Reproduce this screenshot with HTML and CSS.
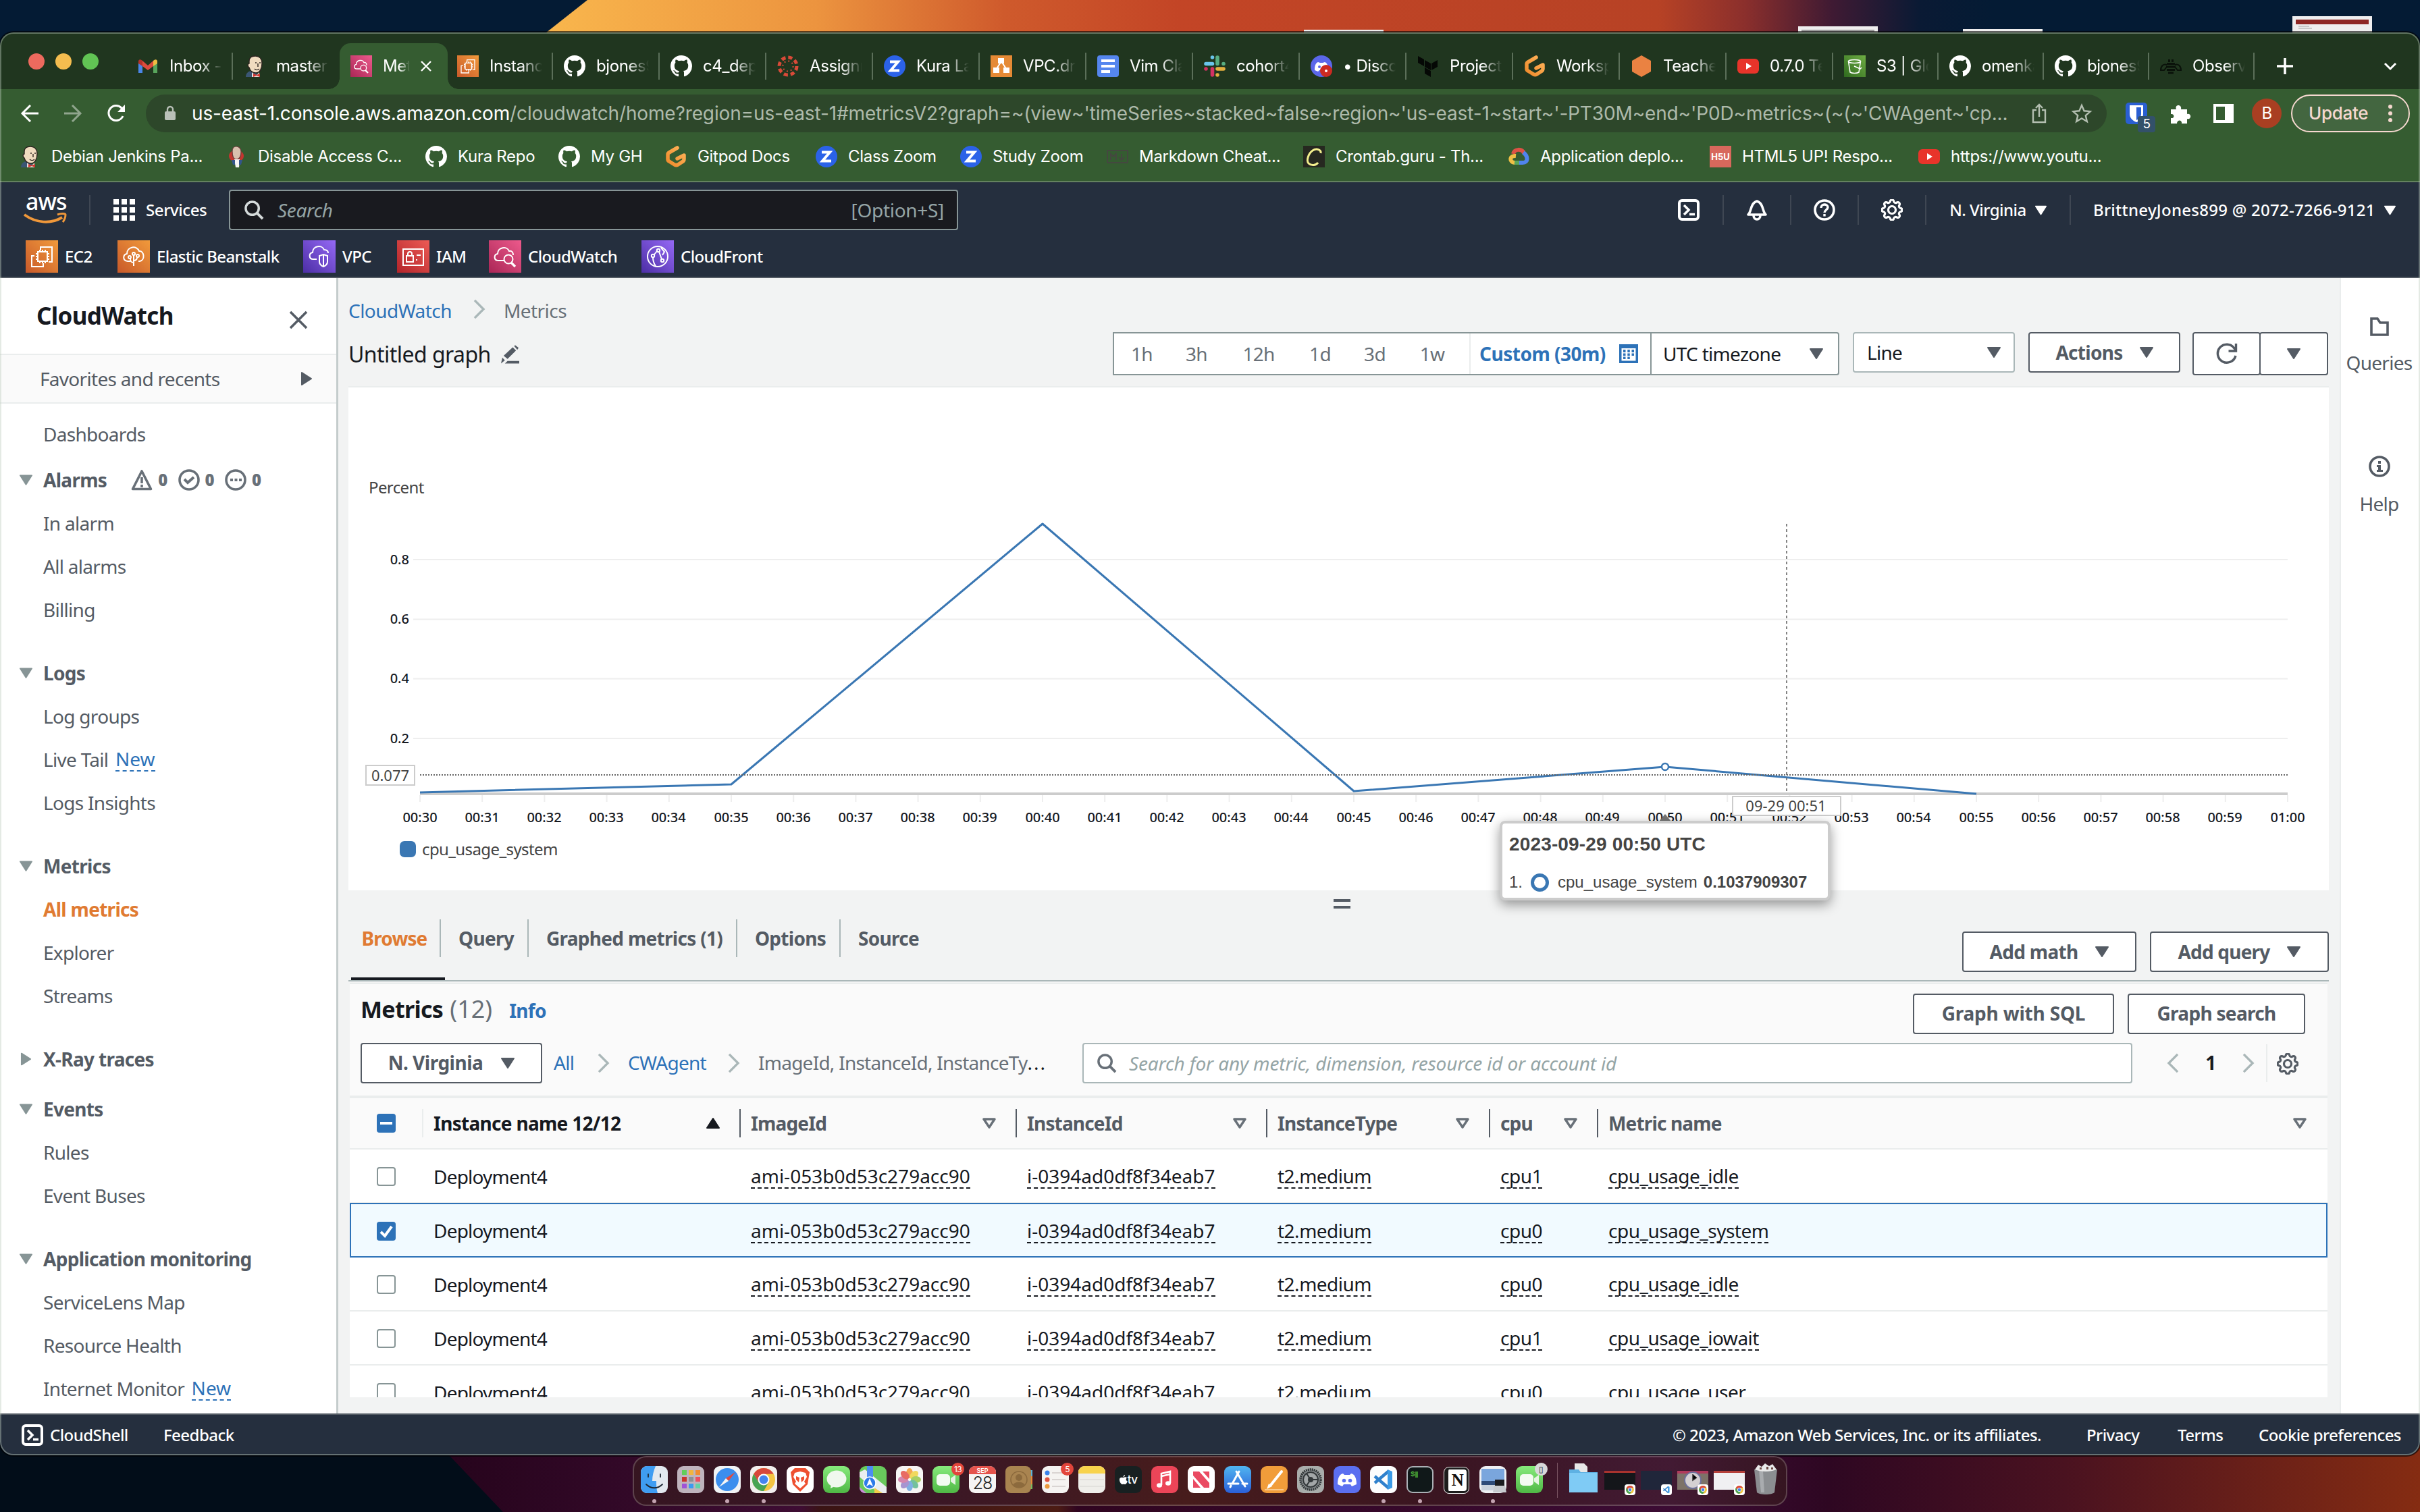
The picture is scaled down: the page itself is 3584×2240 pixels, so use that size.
FILE: index.html
```html
<!DOCTYPE html>
<html lang="en">
<head>
<meta charset="utf-8">
<title>Metrics | CloudWatch</title>
<link rel="stylesheet" href="styles.css">
</head>
<body>
<svg class="defs" width="0" height="0" aria-hidden="true">
  <defs>
    <linearGradient id="gOrange" x1="0" y1="1" x2="1" y2="0"><stop offset="0" stop-color="#c8592a"/><stop offset="1" stop-color="#f19a3b"/></linearGradient>
    <linearGradient id="gPurple" x1="0" y1="1" x2="1" y2="0"><stop offset="0" stop-color="#4c2ea5"/><stop offset="1" stop-color="#9569f5"/></linearGradient>
    <linearGradient id="gRed" x1="0" y1="1" x2="1" y2="0"><stop offset="0" stop-color="#b3242a"/><stop offset="1" stop-color="#ec5b55"/></linearGradient>
    <linearGradient id="gPink" x1="0" y1="1" x2="1" y2="0"><stop offset="0" stop-color="#aa2656"/><stop offset="1" stop-color="#ed5a8c"/></linearGradient>
    <linearGradient id="gGreen" x1="0" y1="1" x2="1" y2="0"><stop offset="0" stop-color="#2f6a1e"/><stop offset="1" stop-color="#6fae44"/></linearGradient>
    <linearGradient id="gGit" x1="1" y1="0" x2="0" y2="1"><stop offset="0" stop-color="#ffb45b"/><stop offset="1" stop-color="#ee8a2b"/></linearGradient>
    <linearGradient id="gMsg" x1="0" y1="0" x2="0" y2="1"><stop offset="0" stop-color="#87ea7c"/><stop offset="1" stop-color="#4fb845"/></linearGradient>
    <linearGradient id="gBlue" x1="0" y1="0" x2="0" y2="1"><stop offset="0" stop-color="#50b5f0"/><stop offset="1" stop-color="#2a5fd8"/></linearGradient>
  </defs>
  <symbol id="github" viewBox="0 0 16 16"><path fill="#fff" d="M8 0C3.58 0 0 3.58 0 8c0 3.54 2.29 6.53 5.47 7.59.4.07.55-.17.55-.38 0-.19-.01-.82-.01-1.49-2.01.37-2.53-.49-2.69-.94-.09-.23-.48-.94-.82-1.13-.28-.15-.68-.52-.01-.53.63-.01 1.08.58 1.23.82.72 1.21 1.87.87 2.33.66.07-.52.28-.87.51-1.07-1.78-.2-3.64-.89-3.64-3.95 0-.87.31-1.59.82-2.15-.08-.2-.36-1.02.08-2.12 0 0 .67-.21 2.2.82.64-.18 1.32-.27 2-.27.68 0 1.36.09 2 .27 1.53-1.04 2.2-.82 2.2-.82.44 1.1.16 1.92.08 2.12.51.56.82 1.27.82 2.15 0 3.07-1.87 3.75-3.65 3.95.29.25.54.73.54 1.48 0 1.07-.01 1.93-.01 2.2 0 .21.15.46.55.38A8.012 8.012 0 0 0 16 8c0-4.42-3.58-8-8-8z"/></symbol>
  <symbol id="gmail" viewBox="0 0 32 32"><path fill="#4a86e8" d="M2 9v17h6V13z"/><path fill="#58a55c" d="M30 9v17h-6V13z"/><path fill="#dc4b3e" d="M8 8l8 7 8-7v8l-8 6-8-6z"/><path fill="#b5332a" d="M2 9c0-3 3-4 6-1v8l-6-4z"/><path fill="#f0bd42" d="M30 9c0-3-3-4-6-1v8l6-4z"/></symbol>
  <symbol id="jenkins" viewBox="0 0 32 32"><path fill="#3a5674" d="M3 32c0-6 4-8 7-9l8 3 6 6z"/><path fill="#f0dcc0" stroke="#2c2420" stroke-width="1.4" d="M8 9c0-6 4-8 9-8s10 3 10 11c0 7-3 14-9 14S9 22 8 18C5 16 6 12 8 12z"/><path fill="#e5e0dc" d="M12 25l6 5 5-5v7H12z"/><path fill="#d0342c" d="M14 27l5 2 5-2v5l-5-2-5 2z"/><path fill="none" stroke="#2c2420" stroke-width="1.4" d="M17 11h2M23 11h2M21 12v5M16 20c2 2 5 2 7 0"/></symbol>
  <symbol id="jenkins-red" viewBox="0 0 32 32"><ellipse cx="16" cy="15" rx="11" ry="9" fill="#c2362f"/><path fill="#d9c0ae" stroke="#6a3a3a" stroke-width="1.2" d="M10 8c0-6 3-7 6-7s7 2 7 8-2 11-7 11-6-6-6-12z"/><path fill="#f5f5f5" d="M13 20h8l-1 12h-5z"/><path fill="#34558b" d="M9 21h5v7h-3zM20 21h5l-2 7h-3z"/></symbol>
  <symbol id="cw-art" viewBox="0 0 48 48"><g fill="none" stroke="#fff" stroke-width="2"><path d="M22 30H14c-7 0-7-9-1-10 0-10 14-12 17-4 4-1 6 2 6 6"/><circle cx="29" cy="28" r="6.5"/><path d="M33 33l6 6" stroke-width="3.4"/></g></symbol>
  <symbol id="ec2-art" viewBox="0 0 48 48"><g fill="none" stroke="#fff" stroke-width="2"><path d="M22 15v-5h17v22h-5M13 23H9v16h17v-5"/><path d="M18 17h14v14H18zM21 14v3M25 14v3M29 14v3M21 31v3M25 31v3M29 31v3M15 20h3M15 24h3M15 28h3M32 20h3M32 24h3M32 28h3"/></g></symbol>
  <symbol id="cloudwatch" viewBox="0 0 48 48"><path fill="url(#gPink)" d="M0 0h48v48H0z"/><use href="#cw-art"/></symbol>
  <symbol id="ec2" viewBox="0 0 48 48"><path fill="url(#gOrange)" d="M0 0h48v48H0z"/><use href="#ec2-art"/></symbol>
  <symbol id="beanstalk" viewBox="0 0 48 48"><path fill="url(#gOrange)" d="M0 0h48v48H0z"/><g fill="none" stroke="#fff" stroke-width="2"><path d="M19 31h-4c-8-1-7-10-1-11 0-11 15-13 18-4 8-1 9 14 1 15h-2"/><path d="M24 38V22M24 33c-4 0-5-2-5-6M24 30c4 0 5-2 5-5"/><circle cx="24" cy="20" r="2"/><circle cx="18" cy="25" r="2"/><circle cx="30" cy="23" r="2"/></g></symbol>
  <symbol id="vpc" viewBox="0 0 48 48"><path fill="url(#gPurple)" d="M0 0h48v48H0z"/><g fill="none" stroke="#fff" stroke-width="2"><path d="M20 28h-5c-7 0-7-9-1-10 0-10 14-12 17-4 4 0 6 2 6 5"/><path d="M30 21l6 2v9c0 3-3 6-6 7-3-1-6-4-6-7v-9zM30 21v18"/></g></symbol>
  <symbol id="iam" viewBox="0 0 48 48"><path fill="url(#gRed)" d="M0 0h48v48H0z"/><g fill="none" stroke="#fff" stroke-width="2"><path d="M9 13h30v24H9zM14 23h10v9H14zM16 23v-3c0-4 6-4 6 0v3M29 22h6M28 29h2"/></g></symbol>
  <symbol id="cloudfront" viewBox="0 0 48 48"><path fill="url(#gPurple)" d="M0 0h48v48H0z"/><g fill="none" stroke="#fff" stroke-width="2"><circle cx="24" cy="24" r="15"/><circle cx="25" cy="15" r="2.2"/><circle cx="17" cy="23" r="2.2"/><circle cx="31" cy="30" r="2.2"/><path d="M17 25c0 6 1 9 4 13M23 16l-4 5M26 17l4 11M29 11l5 6-3 5"/></g></symbol>
  <symbol id="canvas" viewBox="0 0 32 32"><circle cx="16" cy="16" r="13" fill="none" stroke="#d94a38" stroke-width="5" stroke-dasharray="6.2 4" /><circle cx="16" cy="16" r="7.6" fill="none" stroke="#d94a38" stroke-width="2" stroke-dasharray="2 3.97"/></symbol>
  <symbol id="zed" viewBox="0 0 32 32"><circle cx="16" cy="16" r="16" fill="#2b62e8"/><path fill="none" stroke="#fff" stroke-width="4" d="M9 9.500h12L10 22.500h13"/></symbol>
  <symbol id="drawio" viewBox="0 0 32 32"><path fill="#e58a35" d="M0 0h32v32H0z"/><path stroke="#fff" stroke-width="2" d="M16 9L8 21M16 9l8 12"/><path fill="#fff" d="M11 4h9v8h-9zM4 18h9v8H4zM19 18h9v8h-9z"/></symbol>
  <symbol id="docs" viewBox="0 0 32 32"><rect width="32" height="32" rx="4" fill="#5586ee"/><path fill="#fff" d="M6 6h20v4H6zM6 14h20v4H6zM6 22h13v4H6z"/></symbol>
  <symbol id="slack" viewBox="0 0 32 32"><g stroke-width="5.600" stroke-linecap="round"><path stroke="#6ac5ec" d="M12.500 3v0M3 12.500h9.500"/><path stroke="#57ad82" d="M20 3v9.500M29 12.500v0"/><path stroke="#d23163" d="M12.500 20v9M3 20v0"/><path stroke="#e3b03f" d="M20 20h9M20 29v0"/></g></symbol>
  <symbol id="discord" viewBox="0 0 32 32"><circle cx="16" cy="16" r="16" fill="#5b67ea"/><path fill="#fff" d="M6 22c0-8 2-11 5-12l3 1h4l3-1c3 1 5 4 5 12l-5 2-2-2h-6l-2 2z"/><circle cx="13" cy="17" r="2" fill="#5b67ea"/><circle cx="23" cy="23" r="9" fill="#cc2a22"/><circle cx="23" cy="23" r="2" fill="#fff"/></symbol>
  <symbol id="terraform" viewBox="0 0 32 32"><path fill="#050805" d="M1 1l9 5v10l-9-5zM11 7l9 5v10l-9-5zM21 12l9-5v10l-9 5zM11 18l9 5v9l-9-5z"/></symbol>
  <symbol id="gitpod" viewBox="0 0 32 32"><path fill="none" stroke="url(#gGit)" stroke-width="5.500" stroke-linejoin="round" stroke-linecap="round" d="M18 3L6 10c-2 1-2 2-2 3v7c0 1 0 2 2 3l8 5c2 1 3 1 5 0l6-4c2-1 3-2 3-4v-6l-10 5"/></symbol>
  <symbol id="hexagon" viewBox="0 0 32 32"><path fill="#ea8242" d="M16 0l14 8v16l-14 8L2 24V8z"/></symbol>
  <symbol id="youtube" viewBox="0 0 32 32"><rect y="5" width="32" height="22" rx="6" fill="#e8342a"/><path fill="#fff" d="M13 11l8 5-8 5z"/></symbol>
  <symbol id="s3" viewBox="0 0 32 32"><path fill="url(#gGreen)" d="M0 0h32v32H0z"/><g fill="none" stroke="#fff" stroke-width="1.600"><ellipse cx="15.500" cy="9" rx="9" ry="2.500"/><path d="M6.500 9l2.500 16c3 2 10 2 13 0l2.500-16M15 16l9 4 2-2"/></g></symbol>
  <symbol id="bee" viewBox="0 0 32 32"><g fill="none" stroke="#0a120a" stroke-width="2"><path d="M10 14c-5-2-9 2-9 8h5l4-5M22 14c5-2 9 2 9 8h-5l-4-5"/></g><path fill="#0a120a" d="M12 6h3v4h-3zM17 6h3v4h-3zM10 11h12v3H10zM9 15.500h14v3H9zM10 20h12v3H10zM12 24.500h8v3h-8z"/></symbol>
  <symbol id="markdown" viewBox="0 0 32 32"><path fill="none" stroke="#44483f" stroke-width="2" d="M1 7h30v18H1zM6 21V12l4 4 4-4v9M22 12v8M18 17l4 4 4-4"/></symbol>
  <symbol id="crontab" viewBox="0 0 32 32"><path fill="#262820" d="M0 0h32v32H0z"/><path fill="none" stroke="#f3ef8e" stroke-width="3" d="M26 11c1-5-6-8-12-4S4 22 8 26s11 3 14-1"/></symbol>
  <symbol id="gcp" viewBox="0 0 32 32"><g fill="none" stroke-width="6"><path stroke="#dc5245" d="M8 12c2-8 13-8 16-1"/><path stroke="#5084ed" d="M23 10c7 5 8 15-1 15h-5"/><path stroke="#58a55c" d="M17 25H9"/><path stroke="#eebf45" d="M10 25c-8-1-8-11 2-10"/></g></symbol>
  <symbol id="gear" viewBox="0 0 16 16"><g fill="currentColor" stroke="currentColor" stroke-width=".6"><path d="M8 4.754a3.246 3.246 0 1 0 0 6.492 3.246 3.246 0 0 0 0-6.492zM5.754 8a2.246 2.246 0 1 1 4.492 0 2.246 2.246 0 0 1-4.492 0z"/><path d="M9.796 1.343c-.527-1.79-3.065-1.79-3.592 0l-.094.319a.873.873 0 0 1-1.255.52l-.292-.16c-1.64-.892-3.433.902-2.54 2.541l.159.292a.873.873 0 0 1-.52 1.255l-.319.094c-1.79.527-1.79 3.065 0 3.592l.319.094a.873.873 0 0 1 .52 1.255l-.16.292c-.892 1.64.901 3.434 2.541 2.54l.292-.159a.873.873 0 0 1 1.255.52l.094.319c.527 1.79 3.065 1.79 3.592 0l.094-.319a.873.873 0 0 1 1.255-.52l.292.16c1.64.893 3.434-.902 2.54-2.541l-.159-.292a.873.873 0 0 1 .52-1.255l.319-.094c1.79-.527 1.79-3.065 0-3.592l-.319-.094a.873.873 0 0 1-.52-1.255l.16-.292c.893-1.64-.902-3.433-2.541-2.54l-.292.159a.873.873 0 0 1-1.255-.52l-.094-.319zm-2.633.283c.246-.835 1.428-.835 1.674 0l.094.319a1.873 1.873 0 0 0 2.693 1.115l.291-.16c.764-.415 1.6.42 1.184 1.185l-.159.292a1.873 1.873 0 0 0 1.116 2.692l.318.094c.835.246.835 1.428 0 1.674l-.319.094a1.873 1.873 0 0 0-1.115 2.693l.16.291c.415.764-.42 1.6-1.185 1.184l-.291-.159a1.873 1.873 0 0 0-2.693 1.116l-.094.318c-.246.835-1.428.835-1.674 0l-.094-.319a1.873 1.873 0 0 0-2.692-1.115l-.292.16c-.764.415-1.6-.42-1.184-1.185l.159-.291A1.873 1.873 0 0 0 1.945 8.93l-.319-.094c-.835-.246-.835-1.428 0-1.674l.319-.094A1.873 1.873 0 0 0 3.06 4.377l-.16-.292c-.415-.764.42-1.6 1.185-1.184l.292.159a1.873 1.873 0 0 0 2.692-1.115l.094-.319z"/></g></symbol>
  <symbol id="shell" viewBox="0 0 32 32"><rect x="2" y="2" width="28" height="28" rx="4" fill="none" stroke="#fff" stroke-width="4"/><path fill="none" stroke="#fff" stroke-width="3.500" d="M9 9l7 7-7 7M17 22.500h8"/></symbol>
  <symbol id="search" viewBox="0 0 30 30"><circle cx="12" cy="12" r="10" fill="none" stroke="currentColor" stroke-width="3.600"/><path stroke="currentColor" stroke-width="4" d="M19 19l9 9"/></symbol>
  <symbol id="down" viewBox="0 0 20 16"><path fill="currentColor" stroke="currentColor" stroke-width="2" stroke-linejoin="round" d="M1 1h18l-9 14z"/></symbol>
  <symbol id="down-open" viewBox="0 0 20 16"><path fill="none" stroke="currentColor" stroke-width="3.400" stroke-linejoin="round" d="M2 2h16l-8 12z"/></symbol>
  <symbol id="chev" viewBox="0 0 20 32"><path fill="none" stroke="#aab7b8" stroke-width="3.600" d="M3 2l14 14L3 30"/></symbol>
  <symbol id="chrome" viewBox="0 0 40 40"><circle cx="20" cy="20" r="17" fill="#f4c542"/><path fill="#d8483c" d="M5.300 11.500A17 17 0 0 1 34.700 11.500L20 12l-7.500 13z"/><path fill="#48a455" d="M5.300 11.500A17 17 0 0 0 20 37l7.500-13-7.500 4-7.500-4z"/><circle cx="20" cy="20" r="8.500" fill="#fff"/><circle cx="20" cy="20" r="6.500" fill="#4484ef"/></symbol>
  <symbol id="vscode" viewBox="0 0 40 40"><path fill="none" stroke="#2f80cc" stroke-width="4.500" stroke-linejoin="round" d="M28 7L7 25M28 33L7 15"/><path fill="#3b9ae6" d="M26 5l7 3v24l-7 3z"/></symbol>
  <symbol id="facetime" viewBox="0 0 40 40"><rect width="40" height="40" rx="9" fill="url(#gMsg)"/><rect x="6" y="12" width="20" height="17" rx="5" fill="#f4fbf2"/><path fill="#e6f3e2" d="M27 18l7-5v15l-7-5z"/></symbol>
</svg>

<svg class="wallpaper" viewBox="0 0 3584 2240" aria-hidden="true">
  <defs>
    <linearGradient id="sky" gradientUnits="userSpaceOnUse" x1="800" y1="0" x2="2950" y2="0"><stop offset="0" stop-color="#f9b74d"/><stop offset=".19" stop-color="#ec943f"/><stop offset=".32" stop-color="#cf5a2c"/><stop offset=".44" stop-color="#c34526"/><stop offset=".77" stop-color="#b74225"/><stop offset=".83" stop-color="#8b2f2c"/><stop offset=".89" stop-color="#3f1a33"/><stop offset=".95" stop-color="#0a1a34"/><stop offset="1" stop-color="#041b34"/></linearGradient>
    <linearGradient id="floor" gradientUnits="userSpaceOnUse" x1="660" y1="0" x2="3584" y2="0"><stop offset="0" stop-color="#26041c"/><stop offset=".18" stop-color="#3e0d33"/><stop offset=".19" stop-color="#3a1414"/><stop offset=".31" stop-color="#4c1c14"/><stop offset=".32" stop-color="#300520"/><stop offset=".63" stop-color="#3c0c34"/><stop offset=".7" stop-color="#2e0722"/><stop offset=".82" stop-color="#4a1220"/><stop offset="1" stop-color="#852c12"/></linearGradient>
  </defs>
  <path fill="#041b34" d="M0 0h3584v2240H0z"/>
  <path fill="url(#sky)" d="M870 0h2080v60H794z"/>
  <path fill="#020d19" d="M0 2100h760v140H0z"/>
  <path fill="url(#floor)" d="M650 2140h2934v100H745z"/>
  <path fill="#efeeee" d="M1931 44h118v8h-118zM2663 39h118v12h-118zM2907 43h118v8h-118zM3395 24h118v28h-118z"/>
  <path fill="#9c9c9c" d="M2668 44h108v3h-108z"/>
  <path fill="#8e2724" d="M3400 29h108v7h-108z"/>
  <path fill="#c9c9c9" d="M3404 38h16v2h-16zM3404 41h20v2h-20z"/>
</svg>

<div class="window">
  <div class="tabstrip">
    <div class="lights"><i class="red"></i><i class="yellow"></i><i class="green"></i></div>
    <div class="tab"><svg class="fav"><use href="#gmail"/></svg><span>Inbox - b</span></div>
    <div class="tab nosep"><svg class="fav"><use href="#jenkins"/></svg><span>master [</span></div>
    <div class="tab active"><svg class="fav"><use href="#cloudwatch"/></svg><span>Metr</span><svg class="close" viewBox="0 0 16 16"><path stroke="#fff" stroke-width="2.400" d="M1 1l14 14M15 1L1 15"/></svg></div>
    <div class="tab"><svg class="fav"><use href="#ec2"/></svg><span>Instance</span></div>
    <div class="tab"><svg class="fav"><use href="#github"/></svg><span>bjones9/</span></div>
    <div class="tab"><svg class="fav"><use href="#github"/></svg><span>c4_depl</span></div>
    <div class="tab"><svg class="fav"><use href="#canvas"/></svg><span>Assignm</span></div>
    <div class="tab"><svg class="fav"><use href="#zed"/></svg><span>Kura Lab</span></div>
    <div class="tab"><svg class="fav"><use href="#drawio"/></svg><span>VPC.dra</span></div>
    <div class="tab"><svg class="fav"><use href="#docs"/></svg><span>Vim Cla</span></div>
    <div class="tab"><svg class="fav"><use href="#slack"/></svg><span>cohort4</span></div>
    <div class="tab"><svg class="fav"><use href="#discord"/></svg><span>• Discor</span></div>
    <div class="tab"><svg class="fav"><use href="#terraform"/></svg><span>Projects</span></div>
    <div class="tab"><svg class="fav"><use href="#gitpod"/></svg><span>Workspa</span></div>
    <div class="tab"><svg class="fav"><use href="#hexagon"/></svg><span>Teacher</span></div>
    <div class="tab"><svg class="fav"><use href="#youtube"/></svg><span>0.7.0 Te</span></div>
    <div class="tab slim"><svg class="fav"><use href="#s3"/></svg><span>S3 | Glo</span></div>
    <div class="tab slim"><svg class="fav"><use href="#github"/></svg><span>omenka</span></div>
    <div class="tab slim"><svg class="fav"><use href="#github"/></svg><span>bjones9</span></div>
    <div class="tab slim"><svg class="fav"><use href="#bee"/></svg><span>Observa</span></div>
    <svg class="plus" viewBox="0 0 24 24"><path stroke="#fff" stroke-width="3.600" d="M12 0v24M0 12h24"/></svg>
    <svg class="tabmenu" viewBox="0 0 18 12"><path fill="none" stroke="#fff" stroke-width="3" d="M1 2l8 8 8-8"/></svg>
  </div>

  <div class="toolbar">
    <svg class="nav-ico" viewBox="0 0 26 26"><path fill="none" stroke="#fff" stroke-width="3" d="M26 13H2M14 1L2 13l12 12"/></svg>
    <svg class="nav-ico dim" viewBox="0 0 26 26"><path fill="none" stroke="#fff" stroke-width="3" d="M0 13h24M12 1l12 12-12 12"/></svg>
    <svg class="nav-ico" viewBox="0 0 26 26"><path fill="none" stroke="#fff" stroke-width="3" d="M23 17A11 11 0 1 1 21 5l2 3"/><path fill="#fff" d="M26 0v11H15z"/></svg>
    <div class="url">
      <svg class="lock" viewBox="0 0 16 22"><rect y="8" width="16" height="13" rx="2" fill="#b9c0b8"/><path fill="none" stroke="#b9c0b8" stroke-width="2.400" d="M4 9V5a4 4 0 0 1 8 0v4"/></svg>
      <span class="addr"><b>us-east-1.console.aws.amazon.com</b>/cloudwatch/home?region=us-east-1#metricsV2?graph=~(view~'timeSeries~stacked~false~region~'us-east-1~start~'-PT30M~end~'P0D~metrics~(~(~'CWAgent~'cp...</span>
      <svg class="share" viewBox="0 0 22 30"><path fill="none" stroke="#b4bfb1" stroke-width="2.400" d="M7 10H2v18h18V10h-5M11 20V3M6 7l5-5 5 5"/></svg>
      <svg class="star" viewBox="0 0 30 30"><path fill="none" stroke="#b4bfb1" stroke-width="2.400" d="M15 3l3.600 8.300 9 .8-6.800 6 2 8.900L15 22.300 7.200 27l2-8.900-6.800-6 9-.8z"/></svg>
    </div>
    <div class="bitwarden"><svg viewBox="0 0 32 32"><rect width="32" height="32" rx="5" fill="#2a5fd2"/><path fill="#fff" d="M6 4h20v13c0 6-5 10-10 12C11 27 6 23 6 17z"/><path fill="#2a5fd2" d="M16 7h7v10c0 4-3 7-7 9z"/></svg><em>5</em></div>
    <svg class="puzzle" viewBox="0 0 30 30"><path fill="#fff" d="M1 9h8c-3-8 9-8 7 0h9v7c7-2 7 9 0 7v7h-8c1-6-7-6-7 0H1v-8c6 1 6-7 0-6z"/></svg>
    <svg class="panel-ico" viewBox="0 0 30 28"><path fill="#fff" fill-rule="evenodd" d="M0 0h30v28H0zM4 4v20h13V4z"/></svg>
    <div class="avatar">B</div>
    <div class="update">Update<svg viewBox="0 0 6 26"><circle cx="3" cy="3" r="3"/><circle cx="3" cy="13" r="3"/><circle cx="3" cy="23" r="3"/></svg></div>
  </div>

  <div class="bookmarks">
    <a><svg class="fav"><use href="#jenkins"/></svg>Debian Jenkins Pa...</a>
    <a><svg class="fav"><use href="#jenkins-red"/></svg>Disable Access C...</a>
    <a><svg class="fav"><use href="#github"/></svg>Kura Repo</a>
    <a><svg class="fav"><use href="#github"/></svg>My GH</a>
    <a><svg class="fav"><use href="#gitpod"/></svg>Gitpod Docs</a>
    <a><svg class="fav"><use href="#zed"/></svg>Class Zoom</a>
    <a><svg class="fav"><use href="#zed"/></svg>Study Zoom</a>
    <a><svg class="fav"><use href="#markdown"/></svg>Markdown Cheat...</a>
    <a><svg class="fav"><use href="#crontab"/></svg>Crontab.guru - Th...</a>
    <a><svg class="fav"><use href="#gcp"/></svg>Application deplo...</a>
    <a><i class="hsu">H5U</i>HTML5 UP! Respo...</a>
    <a><svg class="fav"><use href="#youtube"/></svg>https://www.youtu...</a>
  </div>

  <header class="aws">
    <div class="aws-top">
      <div class="aws-logo"><b>aws</b><svg viewBox="0 0 64 18"><path fill="none" stroke="#f0983a" stroke-width="4" d="M1 3c18 13 40 14 56 4"/><path fill="none" stroke="#f0983a" stroke-width="3" d="M50 3c5-2 12-2 12 0s-1 7-4 11"/></svg></div>
      <div class="services"><svg viewBox="0 0 32 32"><path fill="#fff" d="M0 0h8v8H0zM12 0h8v8h-8zM24 0h8v8h-8zM0 12h8v8H0zM12 12h8v8h-8zM24 12h8v8h-8zM0 24h8v8H0zM12 24h8v8h-8zM24 24h8v8h-8z"/></svg>Services</div>
      <div class="aws-search"><svg><use href="#search"/></svg><i>Search</i><span>[Option+S]</span></div>
      <div class="util">
        <div class="cell c-shell"><svg><use href="#shell"/></svg></div>
        <div class="cell"><svg viewBox="0 0 32 32"><path fill="none" stroke="#fff" stroke-width="3.600" stroke-linejoin="round" d="M3 23c5-4 3-17 13-20 10 3 8 16 13 20zM11 24c0 8 10 8 10 0"/></svg></div>
        <div class="cell"><svg viewBox="0 0 32 32"><circle cx="16" cy="16" r="14" fill="none" stroke="#fff" stroke-width="3.600"/><path fill="none" stroke="#fff" stroke-width="3.400" d="M11 13c0-7 10-6 10-1 0 4-5 4-5 8M16 22v3.500"/></svg></div>
        <div class="cell"><svg class="white"><use href="#gear"/></svg></div>
        <div class="cell c-region">N. Virginia<svg class="tri"><use href="#down"/></svg></div>
        <div class="cell c-user">BrittneyJones899 @ 2072-7266-9121<svg class="tri"><use href="#down"/></svg></div>
      </div>
    </div>
    <nav class="aws-favs">
      <a><svg><use href="#ec2"/></svg>EC2</a>
      <a><svg><use href="#beanstalk"/></svg>Elastic Beanstalk</a>
      <a><svg><use href="#vpc"/></svg>VPC</a>
      <a><svg><use href="#iam"/></svg>IAM</a>
      <a><svg><use href="#cloudwatch"/></svg>CloudWatch</a>
      <a><svg><use href="#cloudfront"/></svg>CloudFront</a>
    </nav>
  </header>

  <div class="page">
    <aside class="side">
      <div class="side-head"><h2>CloudWatch</h2><svg viewBox="0 0 26 26"><path stroke="#545b64" stroke-width="3.600" d="M1 1l24 24M25 1L1 25"/></svg></div>
      <div class="side-fav">Favorites and recents<svg viewBox="0 0 16 20"><path fill="#545b64" stroke="#545b64" stroke-width="2" stroke-linejoin="round" d="M1 1l14 9-14 9z"/></svg></div>
      <ul>
        <li class="first">Dashboards</li>
        <li class="sec alarms"><svg class="caret"><use href="#down"/></svg><span>Alarms</span><div class="counts">
            <svg viewBox="0 0 32 32"><path fill="none" stroke="#687078" stroke-width="3.600" stroke-linejoin="round" d="M16 3l13.500 26.500h-27z"/><path stroke="#687078" stroke-width="3.600" d="M16 12v9M16 23v4"/></svg><b>0</b>
            <svg viewBox="0 0 32 32"><circle cx="16" cy="16" r="14" fill="none" stroke="#687078" stroke-width="3.600"/><path fill="none" stroke="#687078" stroke-width="4" d="M9 15l5 5 9-8"/></svg><b>0</b>
            <svg viewBox="0 0 32 32"><circle cx="16" cy="16" r="14" fill="none" stroke="#687078" stroke-width="3.600"/><path stroke="#687078" stroke-width="4" stroke-dasharray="4 2.500" d="M8 16h17"/></svg><b>0</b>
          </div></li>
        <li>In alarm</li><li>All alarms</li><li>Billing</li>
        <li class="sec gap"><svg class="caret"><use href="#down"/></svg>Logs</li>
        <li>Log groups</li><li>Live Tail <a>New</a></li><li>Logs Insights</li>
        <li class="sec gap"><svg class="caret"><use href="#down"/></svg>Metrics</li>
        <li class="on">All metrics</li><li>Explorer</li><li>Streams</li>
        <li class="sec gap"><svg class="caret right"><use href="#down"/></svg>X-Ray traces</li>
        <li class="sec gap-s"><svg class="caret"><use href="#down"/></svg>Events</li>
        <li>Rules</li><li>Event Buses</li>
        <li class="sec gap"><svg class="caret"><use href="#down"/></svg>Application monitoring</li>
        <li>ServiceLens Map</li><li>Resource Health</li><li>Internet Monitor <a>New</a></li>
      </ul>
    </aside>

    <main class="main">
      <div class="crumbs"><a>CloudWatch</a><svg class="chev"><use href="#chev"/></svg><span>Metrics</span></div>
      <div class="graph-head">
        <h1>Untitled graph<svg viewBox="0 0 28 28"><path fill="#545b64" d="M0 28l2-9 4 4zM4 16L18 3l5 5L10 21zM20 1l2-1 5 4-2 3zM10 24h18v4H6z"/></svg></h1>
        <div class="controls">
          <div class="range"><span class="r1">1h</span><span class="r2">3h</span><span class="r3">12h</span><span class="r4">1d</span><span class="r5">3d</span><span class="r6">1w</span><b>Custom (30m)<svg viewBox="0 0 28 28"><path fill="#2d72b8" fill-rule="evenodd" d="M0 0h28v28H0zM3.500 6v18.500h21V6z"/><path fill="#2d72b8" d="M6 8h3.500v4H6zM12.300 8h3.500v4h-3.500zM18.500 8H22v4h-3.500zM6 13.500h3.500v3.500H6zM12.300 13.500h3.500v3.500h-3.500zM18.500 13.500H22v3.500h-3.500zM6 18.500h3.500V22H6zM12.300 18.500h3.500V22h-3.500z"/></svg></b></div>
          <div class="tz">UTC timezone<svg class="tri"><use href="#down"/></svg></div>
          <div class="kind">Line<svg class="tri"><use href="#down"/></svg></div>
          <div class="btn actions">Actions<svg class="tri"><use href="#down"/></svg></div>
          <div class="btn refresh"><svg viewBox="0 0 32 32"><path fill="none" stroke="#545b64" stroke-width="3.400" d="M29 19A13.500 13.500 0 1 1 27 8l2 3M29.500 1v11h-11"/></svg></div>
          <div class="btn more"><svg class="tri"><use href="#down"/></svg></div>
        </div>
      </div>

      <div class="chart">
        <svg class="plot" viewBox="516 574 2932 745">
          <text x="546" y="731" class="t24">Percent</text>
          <path stroke="#eeeeee" stroke-width="2" d="M612 829H3388M612 917.500H3388M612 1005.500H3388M612 1094H3388"/>
          <g class="t20" text-anchor="end"><text x="606" y="836">0.8</text><text x="606" y="924">0.6</text><text x="606" y="1012">0.4</text><text x="606" y="1101">0.2</text></g>
          <path stroke="#eeeeee" stroke-width="2" d="M622 1178v10M714.200 1178v10M806.400 1178v10M898.600 1178v10M990.800 1178v10M1083 1178v10M1175.200 1178v10M1267.400 1178v10M1359.600 1178v10M1451.800 1178v10M1544 1178v10M1636.200 1178v10M1728.400 1178v10M1820.600 1178v10M1912.800 1178v10M2005 1178v10M2097.200 1178v10M2189.400 1178v10M2281.600 1178v10M2373.800 1178v10M2466 1178v10M2558.200 1178v10M2650.400 1178v10M2742.600 1178v10M2834.800 1178v10M2927 1178v10M3019.200 1178v10M3111.400 1178v10M3203.600 1178v10M3295.800 1178v10M3388 1178v10"/>
          <path stroke="#cccccc" stroke-width="4" d="M622 1176H3388"/>
          <g class="t20" text-anchor="middle"><text x="622" y="1218">00:30</text><text x="714" y="1218">00:31</text><text x="806" y="1218">00:32</text><text x="898" y="1218">00:33</text><text x="990" y="1218">00:34</text><text x="1083" y="1218">00:35</text><text x="1175" y="1218">00:36</text><text x="1267" y="1218">00:37</text><text x="1359" y="1218">00:38</text><text x="1451" y="1218">00:39</text><text x="1544" y="1218">00:40</text><text x="1636" y="1218">00:41</text><text x="1728" y="1218">00:42</text><text x="1820" y="1218">00:43</text><text x="1912" y="1218">00:44</text><text x="2005" y="1218">00:45</text><text x="2097" y="1218">00:46</text><text x="2189" y="1218">00:47</text><text x="2281" y="1218">00:48</text><text x="2373" y="1218">00:49</text><text x="2466" y="1218">00:50</text><text x="2558" y="1218">00:51</text><text x="2650" y="1218">00:52</text><text x="2742" y="1218">00:53</text><text x="2834" y="1218">00:54</text><text x="2927" y="1218">00:55</text><text x="3019" y="1218">00:56</text><text x="3111" y="1218">00:57</text><text x="3203" y="1218">00:58</text><text x="3295" y="1218">00:59</text><text x="3388" y="1218">01:00</text></g>
          <path fill="none" stroke="#3a77b3" stroke-width="3" stroke-linejoin="round" d="M622 1174L1083 1162 1544 776 2005 1172 2466 1136 2927 1176"/>
          <path stroke="#666" stroke-width="2" stroke-dasharray="2 2" d="M622 1148H3388"/>
          <path stroke="#666" stroke-width="1.600" stroke-dasharray="4 4" d="M2646 776V1176"/>
          <circle cx="2466" cy="1136" r="5" fill="#fff" stroke="#3a77b3" stroke-width="2.500"/>
          <rect x="542" y="1134" width="72" height="29" fill="#fff" stroke="#ccc" stroke-width="2"/>
          <text x="578" y="1156.500" class="t22" text-anchor="middle">0.077</text>
          <rect x="2566" y="1180" width="160" height="28" fill="#fff" stroke="#ccc" stroke-width="2"/>
          <text x="2645" y="1202" class="t22" text-anchor="middle">09-29 00:51</text>
          <path fill="#777" d="M2466 1206l10 12h-20z"/>
          <rect x="592" y="1246" width="24" height="24" rx="7" fill="#3a77b3"/>
          <text x="625" y="1267" class="t24">cpu_usage_system</text>
        </svg>
        <div class="tip">
          <strong>2023-09-29 00:50 UTC</strong>
          <div class="tip-row">1.<i></i>cpu_usage_system<b>0.1037909307</b></div>
        </div>
      </div>

      <div class="handle"><i></i><i></i></div>

      <div class="tabs">
        <span class="t1 on">Browse</span><span class="t2">Query</span><span class="t3">Graphed metrics (1)</span><span class="t4">Options</span><span class="t5">Source</span>
        <div class="tab-actions"><div class="btn b-math">Add math<svg class="tri"><use href="#down"/></svg></div><div class="btn b-query">Add query<svg class="tri"><use href="#down"/></svg></div></div>
      </div>

      <section class="panel">
        <div class="panel-head">
          <h2>Metrics <span>(12)</span><a>Info</a></h2>
          <div class="btn b-sql">Graph with SQL</div><div class="btn b-search">Graph search</div>
        </div>
        <div class="filters">
          <div class="btn b-region">N. Virginia<svg class="tri"><use href="#down"/></svg></div>
          <a class="f-all">All</a><svg class="chev"><use href="#chev"/></svg><a class="f-cw">CWAgent</a><svg class="chev"><use href="#chev"/></svg><span class="f-dim">ImageId, InstanceId, InstanceTy<em>...</em></span>
          <div class="find"><svg><use href="#search"/></svg>Search for any metric, dimension, resource id or account id</div>
          <svg class="chev back"><use href="#chev"/></svg><b class="pg">1</b><svg class="chev fwd"><use href="#chev"/></svg>
          <div class="prefs"><svg><use href="#gear"/></svg></div>
        </div>
        <div class="row head">
          <div class="ck"><i class="box mixed"></i></div>
          <div class="sorted"><span>Instance name 12/12</span><svg class="tri up"><use href="#down"/></svg></div>
          <div><span>ImageId</span><svg class="tri"><use href="#down-open"/></svg></div>
          <div><span>InstanceId</span><svg class="tri"><use href="#down-open"/></svg></div>
          <div><span>InstanceType</span><svg class="tri"><use href="#down-open"/></svg></div>
          <div><span>cpu</span><svg class="tri"><use href="#down-open"/></svg></div>
          <div><span>Metric name</span><svg class="tri"><use href="#down-open"/></svg></div>
        </div>
        <div class="row"><div class="ck"><i class="box"></i></div><div>Deployment4</div><div><u class="id">ami-053b0d53c279acc90</u></div><div><u class="id">i-0394ad0df8f34eab7</u></div><div><u>t2.medium</u></div><div><u>cpu1</u></div><div><u>cpu_usage_idle</u></div></div>
        <div class="row picked"><div class="ck"><i class="box tick"><svg viewBox="0 0 28 28"><path fill="none" stroke="#fff" stroke-width="4" d="M6 15l6 6L22 7"/></svg></i></div><div>Deployment4</div><div><u class="id">ami-053b0d53c279acc90</u></div><div><u class="id">i-0394ad0df8f34eab7</u></div><div><u>t2.medium</u></div><div><u>cpu0</u></div><div><u>cpu_usage_system</u></div></div>
        <div class="row"><div class="ck"><i class="box"></i></div><div>Deployment4</div><div><u class="id">ami-053b0d53c279acc90</u></div><div><u class="id">i-0394ad0df8f34eab7</u></div><div><u>t2.medium</u></div><div><u>cpu0</u></div><div><u>cpu_usage_idle</u></div></div>
        <div class="row"><div class="ck"><i class="box"></i></div><div>Deployment4</div><div><u class="id">ami-053b0d53c279acc90</u></div><div><u class="id">i-0394ad0df8f34eab7</u></div><div><u>t2.medium</u></div><div><u>cpu1</u></div><div><u>cpu_usage_iowait</u></div></div>
        <div class="row"><div class="ck"><i class="box"></i></div><div>Deployment4</div><div><u class="id">ami-053b0d53c279acc90</u></div><div><u class="id">i-0394ad0df8f34eab7</u></div><div><u>t2.medium</u></div><div><u>cpu0</u></div><div><u>cpu_usage_user</u></div></div>
      </section>
    </main>

    <aside class="rail">
      <div class="rail-q"><svg viewBox="0 0 28 28"><path fill="none" stroke="#545b64" stroke-width="3.600" d="M2 2h9l4 6h11v18H2z"/></svg>Queries</div>
      <div class="rail-h"><svg viewBox="0 0 32 32"><circle cx="16" cy="16" r="14" fill="none" stroke="#545b64" stroke-width="3.600"/><path fill="#545b64" d="M14 8h4v4h-4zM12 14h6v7h3v3h-9v-3h2v-4h-2z"/></svg>Help</div>
    </aside>
  </div>

  <footer class="foot">
    <svg><use href="#shell"/></svg><span class="f1">CloudShell</span><span>Feedback</span>
    <span class="f3">© 2023, Amazon Web Services, Inc. or its affiliates.</span><span class="f4">Privacy</span><span class="f5">Terms</span><span class="f6">Cookie preferences</span>
  </footer>
</div>

<div class="dock">
  <div class="app run"><svg viewBox="0 0 40 40"><rect width="40" height="40" rx="9" fill="#e3e9ef"/><path fill="#3f9df2" d="M9 0h13c-3 7-5 14-5 22h6c0 6 0 12 2 18H9a9 9 0 0 1-9-9V9a9 9 0 0 1 9-9z"/><path fill="none" stroke="#1d2733" stroke-width="1.800" stroke-linecap="round" d="M11 12v4M29 12v4M8 27c7 7 17 7 24 0"/></svg></div>
  <div class="app"><svg viewBox="0 0 40 40"><rect width="40" height="40" rx="9" fill="#bfb4bd"/><g><path fill="#62cf5a" d="M7 6h7v7H7z"/><path fill="#f0b53f" d="M17 6h7v7h-7z"/><path fill="#f08c32" d="M27 6h7v7h-7z"/><path fill="#c9342d" d="M7 16h7v7H7z"/><path fill="#8d9096" d="M17 16h7v7h-7z"/><path fill="#ea4f62" d="M27 16h7v7h-7z"/><path fill="#a052d6" d="M7 26h7v7H7z"/><path fill="#3b9bf0" d="M17 26h7v7h-7z"/><path fill="#63d2a6" d="M27 26h7v7h-7z"/></g></svg></div>
  <div class="app run"><svg viewBox="0 0 40 40"><rect width="40" height="40" rx="9" fill="#f1f3f5"/><circle cx="20" cy="20" r="17" fill="#3b8eee"/><path fill="#e5493b" d="M32 9L22 22l-4-4z"/><path fill="#f5f5f5" d="M8 31l10-13 4 4z"/></svg></div>
  <div class="app run"><svg viewBox="0 0 40 40"><rect width="40" height="40" rx="9" fill="#f2efee"/><use href="#chrome"/></svg></div>
  <div class="app"><svg viewBox="0 0 40 40"><rect width="40" height="40" rx="9" fill="#fff"/><path fill="#ee5030" d="M12 3h16l6 6-3 18-11 11L9 27 6 9z"/><path fill="#fff" d="M12 10l8-2 8 2 2 6-4 7 2 3-8 7-8-7 2-3-4-7z"/><path fill="#ee5030" d="M14 15l5 2-1 7-4-4zM26 15l-5 2 1 7 4-4z"/></svg></div>
  <div class="app"><svg viewBox="0 0 40 40"><rect width="40" height="40" rx="9" fill="url(#gMsg)"/><ellipse cx="20" cy="19" rx="14.500" ry="12.500" fill="#f0f8ee"/><path fill="#f0f8ee" d="M12 26l-1 7 8-4z"/></svg></div>
  <div class="app"><svg viewBox="0 0 40 40"><rect width="40" height="40" rx="9" fill="#69c95c"/><path fill="#e9eef0" d="M0 9l8-4 32 26v9H28L0 16z"/><path fill="#4c8cf2" d="M11 0h9v20h-9z"/><path fill="#c98bd8" d="M0 31l10 9H8a8 8 0 0 1-8-8z"/><path fill="#f1cd4a" d="M22 32l12 8H22z"/><circle cx="15" cy="25" r="9" fill="#2d7be8" stroke="#fff" stroke-width="1.500"/><path fill="#fff" d="M15 18l5 12-5-3-5 3z"/></svg></div>
  <div class="app"><svg viewBox="0 0 40 40"><rect width="40" height="40" rx="9" fill="#f6f5f4"/><g opacity=".85"><ellipse cx="20" cy="10.500" rx="5" ry="7.500" fill="#f39a35"/><ellipse cx="20" cy="10.500" rx="5" ry="7.500" fill="#f1d443" transform="rotate(45 20 20)"/><ellipse cx="20" cy="10.500" rx="5" ry="7.500" fill="#9ac94c" transform="rotate(90 20 20)"/><ellipse cx="20" cy="10.500" rx="5" ry="7.500" fill="#5eb98e" transform="rotate(135 20 20)"/><ellipse cx="20" cy="10.500" rx="5" ry="7.500" fill="#6ca4df" transform="rotate(180 20 20)"/><ellipse cx="20" cy="10.500" rx="5" ry="7.500" fill="#9a85ca" transform="rotate(225 20 20)"/><ellipse cx="20" cy="10.500" rx="5" ry="7.500" fill="#cf74a2" transform="rotate(270 20 20)"/><ellipse cx="20" cy="10.500" rx="5" ry="7.500" fill="#e6544c" transform="rotate(315 20 20)"/></g></svg></div>
  <div class="app"><svg><use href="#facetime"/></svg><em>13</em></div>
  <div class="app cal"><div><small>SEP</small><strong>28</strong></div></div>
  <div class="app"><svg viewBox="0 0 40 40"><path fill="#5db5d8" d="M34 6h6v9h-6z"/><path fill="#e88b3a" d="M34 15h6v12h-6z"/><path fill="#79bd62" d="M34 27h6v7h-6z"/><rect width="38" height="40" rx="8" fill="#a98450"/><circle cx="20" cy="20" r="12" fill="none" stroke="#8c6a3d" stroke-width="1.600"/><circle cx="20" cy="17" r="5" fill="#8c6a3d"/><path fill="#8c6a3d" d="M11 28c3-6 15-6 18 0-5 5-13 5-18 0z"/></svg></div>
  <div class="app"><svg viewBox="0 0 40 40"><rect width="40" height="40" rx="9" fill="#f5f3f1"/><circle cx="8" cy="10" r="3.500" fill="#3b82ea"/><circle cx="8" cy="20" r="3.500" fill="#e0533f"/><circle cx="8" cy="30" r="3.500" fill="#ec9a3c"/><path stroke="#cfcac8" stroke-width="1.600" d="M15 10h20M15 20h20M15 30h20"/></svg><em>5</em></div>
  <div class="app"><svg viewBox="0 0 40 40"><rect width="40" height="40" rx="9" fill="#efeeea"/><path fill="#f8d34c" d="M0 11V9a9 9 0 0 1 9-9h22a9 9 0 0 1 9 9v2z"/><path stroke="#d5d3cf" d="M2 20h36M2 30h36"/></svg></div>
  <div class="app tv"><div><svg viewBox="0 0 12 14"><path fill="#fff" d="M8 0c0 2-1 3-2.500 3C5.500 1.500 6.500.5 8 0zM6 4c1.500-1 4-1 5 .5-2 1.500-1.500 4 .8 5C11 12 9.500 14 8 14s-2-.5-3.500 0C2 14.500-2 7 1 4.500 3 3 4.500 4 6 4z"/></svg>tv</div></div>
  <div class="app"><svg viewBox="0 0 40 40"><rect width="40" height="40" rx="9" fill="#ec4558"/><path fill="none" stroke="#fff" stroke-width="2.600" d="M15 28V11l13-3v17M15 15l13-3"/><ellipse cx="12" cy="28.500" rx="4" ry="3.200" fill="#fff"/><ellipse cx="25" cy="25.500" rx="4" ry="3.200" fill="#fff"/></svg></div>
  <div class="app"><svg viewBox="0 0 40 40"><rect width="40" height="40" rx="9" fill="#fff"/><path fill="#ea4a62" d="M8 8h9l15 17v7h-8L8 14zM22 8h10v11zM8 19l11 13H8z"/></svg></div>
  <div class="app"><svg viewBox="0 0 40 40"><rect width="40" height="40" rx="9" fill="url(#gBlue)"/><path fill="none" stroke="#fff" stroke-width="3" stroke-linecap="round" d="M22 8L12 26M18 8l13 22M6 26h15M27 26h7M10 29l-1 2"/></svg></div>
  <div class="app"><svg viewBox="0 0 40 40"><rect width="40" height="40" rx="9" fill="#f19d3a"/><path stroke="#fff" stroke-width="4" stroke-linecap="round" d="M31 8L15 28"/><path fill="#fff" d="M12 26l5 4-8 4z"/><path stroke="#fbd9a8" stroke-width="1.500" d="M6 35h28"/></svg></div>
  <div class="app"><svg viewBox="0 0 40 40"><rect width="40" height="40" rx="9" fill="#a9adab"/><circle cx="20" cy="20" r="15" fill="#8d9294" stroke="#33383a" stroke-width="3.500" stroke-dasharray="2 1"/><circle cx="20" cy="20" r="11" fill="#a3a7a8" stroke="#33383a" stroke-width="2"/><circle cx="20" cy="20" r="4" fill="#33383a"/><path stroke="#33383a" stroke-width="2.200" d="M20 20h11M20 20l-6 9M20 20l-6-9"/></svg></div>
  <div class="app"><svg viewBox="0 0 40 40"><rect width="40" height="40" rx="9" fill="#5b6ff0"/><path fill="#fff" d="M6 27c0-10 3-15 8-16l2 2h8l2-2c5 1 8 6 8 16l-7 3-2-3H15l-2 3z"/><circle cx="15.500" cy="21.500" r="2.800" fill="#5b6ff0"/><circle cx="24.500" cy="21.500" r="2.800" fill="#5b6ff0"/></svg></div>
  <div class="app run"><svg viewBox="0 0 40 40"><rect width="40" height="40" rx="9" fill="#fdfdfd"/><use href="#vscode"/></svg></div>
  <div class="app run term"><div>$<i></i></div></div>
  <div class="app notion"><div>N</div></div>
  <div class="app run"><svg viewBox="0 0 40 40"><rect width="40" height="40" rx="9" fill="#eef0f3"/><path fill="#7aa6dd" d="M3 4h34v18H3z"/><path fill="#2d4b78" d="M3 22h34v6H3z"/><path fill="#c9d2dc" d="M3 28h24v8H3z"/><path fill="#1a1c1f" d="M23 20h14v9H23z"/><path fill="#c7cbcf" d="M22 29h16l2 10H20z"/></svg></div>
  <div class="app"><svg><use href="#facetime"/></svg><em class="pale">▯</em></div>
  <div class="split"></div>
  <div class="app folder"><svg viewBox="0 0 42 44"><path fill="#e7e7e7" d="M8 0h14l5 5v14H8z"/><path fill="#5eb1e3" d="M0 9h14l3 4h25v10H0z"/><path fill="#7fcbf5" d="M0 14h42v29H0z"/></svg></div>
  <div class="mini"><svg viewBox="0 0 48 36"><path fill="#14161a" d="M1 0h46v28H1z"/><path fill="#a8332e" d="M1 0h46v3H1z"/><rect x="31" y="20" width="16" height="16" rx="4" fill="#fff"/><use href="#chrome" x="32" y="21" width="14" height="14"/></svg></div>
  <div class="mini"><svg viewBox="0 0 48 36"><path fill="#20263a" d="M1 0h46v28H1z"/><rect x="31" y="20" width="16" height="16" rx="4" fill="#fff"/><use href="#vscode" x="32" y="21" width="14" height="14"/></svg></div>
  <div class="mini"><svg viewBox="0 0 48 36"><path fill="#7d7268" d="M1 0h46v28H1z"/><path fill="#b03a5c" d="M1 0h46v4H1z"/><circle cx="24" cy="14" r="12" fill="#d4d0d2" stroke="#6d6f9a" stroke-width="2"/><path stroke="#333" stroke-width="1.500" d="M24 5v9l6-4"/><rect x="31" y="20" width="16" height="16" rx="4" fill="#fff"/><use href="#chrome" x="32" y="21" width="14" height="14"/></svg></div>
  <div class="mini"><svg viewBox="0 0 48 36"><path fill="#f0f0f2" d="M1 0h46v28H1z"/><path fill="#b5413b" d="M1 0h46v3H1z"/><rect x="31" y="20" width="16" height="16" rx="4" fill="#fff"/><use href="#chrome" x="32" y="21" width="14" height="14"/></svg></div>
  <div class="app trash"><svg viewBox="0 0 36 46"><path fill="#8b8e91" d="M1 9h34l-4 34c-4 4-22 4-26 0z"/><path fill="#a9acaf" d="M8 11h6l2 32h-5z"/><path fill="#e9e9e9" d="M2 9l5-7 5 3 5-5 6 4 5-3 6 8c-8 4-24 4-32 0z"/><path fill="#6b4a45" d="M9 6h3v3H9zM19 5h3v4h-3zM26 6h3v3h-3z"/></svg></div>
</div>
</body>
</html>
```
FILE: styles.css
```css
* { box-sizing: border-box; }
body {
  margin: 0; width: 3584px; height: 2240px; overflow: hidden; position: relative;
  font-family: "Noto Sans", "Open Sans", sans-serif; font-size: 28px; letter-spacing: -0.025em;
  color: #16191f; background: #041b34;
  display: flex; flex-direction: column; align-items: center; padding-top: 48px; line-height: 1.3;
}
.defs { position: absolute; }
.wallpaper { position: absolute; left: 0; top: 0; width: 3584px; height: 2240px; }
svg { display: block; flex: none; overflow: visible; }
i, em { font-style: normal; }
h1, h2, ul { margin: 0; padding: 0; }

.window {
  position: relative; width: 3584px; height: 2108px; flex: none; overflow: hidden; border-radius: 20px;
  display: flex; flex-direction: column; background: #252f3e; box-shadow: 0 0 0 2px rgba(0,0,0,.6);
}
.window::after {
  content: ""; position: absolute; inset: 0; border: 2px solid rgba(190,205,190,.42);
  border-radius: 20px; pointer-events: none;
}

/* browser chrome */
.tabstrip {
  height: 84px; flex: none; background: #20361f; display: flex; align-items: center; color: #fff;
  font-family: Inter, sans-serif; font-size: 24px; letter-spacing: -0.4px; padding-top: 16px;
}
.lights { width: 187px; flex: none; display: flex; gap: 16px; padding-left: 42px; margin-top: -14px; }
.lights i { width: 24px; height: 24px; border-radius: 50%; }
.red { background: #ed6a5e; } .yellow { background: #f4bd4f; } .green { background: #61c454; }
.fav { width: 32px; height: 32px; margin-right: 16px; }
.tab {
  width: 158px; height: 40px; flex: none; padding-left: 16px; display: flex; align-items: center; position: relative;
}
.tab.slim { width: 156px; }
.tab::after { content: ""; position: absolute; right: 0; top: 0; width: 2px; height: 40px; background: #5b6f59; }
.tab.nosep::after { display: none; }
.tab span {
  width: 78px; overflow: hidden; white-space: nowrap;
  -webkit-mask-image: linear-gradient(90deg, #000 60%, transparent); mask-image: linear-gradient(90deg, #000 60%, transparent);
}
.tab.active {
  width: 160px; height: 68px; margin: 0 -2px 0 0; background: #355c31; border-radius: 16px 16px 0 0;
}
.tab.active span { width: 40px; }
.tab.active::after, .tab.active::before {
  content: ""; position: absolute; top: auto; bottom: 0; width: 16px; height: 16px;
}
.tab.active::before { left: -16px; background: radial-gradient(circle at 0 0, transparent 15.5px, #355c31 16px); }
.tab.active::after { right: -16px; background: radial-gradient(circle at 100% 0, transparent 15.5px, #355c31 16px); }
.close { width: 16px; height: 16px; margin-left: 16px; }
.plus { width: 24px; height: 24px; margin-left: 33px; }
.tabmenu { width: 18px; height: 12px; margin-left: 135px; }

.toolbar {
  height: 72px; flex: none; background: #355c31; display: flex; align-items: center; padding-left: 31px;
  font-family: Inter, sans-serif; color: #fff;
}
.nav-ico { width: 26px; height: 26px; margin-right: 38px; }
.dim { opacity: .45; }
.url {
  width: 2904px; height: 56px; margin-left: -7px; border-radius: 28px; background: #2d472a; flex: none;
  display: flex; align-items: center; padding-left: 28px; font-size: 28px; color: #aebaab; white-space: nowrap;
}
.lock { width: 16px; height: 22px; margin-right: 24px; }
.addr { width: 2725px; letter-spacing: -0.14px; }
.addr b { font-weight: 400; color: #fff; }
.share { width: 22px; height: 30px; }
.star { width: 30px; height: 30px; margin-left: 37px; }
.bitwarden { position: relative; width: 32px; height: 32px; margin-left: 28px; }
.bitwarden em {
  position: absolute; left: 18px; top: 20px; width: 26px; height: 24px; border-radius: 4px; background: #33516a;
  font-size: 19px; line-height: 24px; text-align: center;
}
.puzzle { width: 30px; height: 30px; margin-left: 34px; }
.panel-ico { width: 30px; height: 28px; margin-left: 34px; }
.avatar {
  width: 44px; height: 44px; border-radius: 50%; background: #a93f22; margin-left: 27px; font-size: 24px;
  display: flex; align-items: center; justify-content: center;
}
.update {
  width: 176px; height: 56px; margin-left: 14px; border: 2px solid #f5d8cf; border-radius: 28px; background: #436640;
  color: #f5d8cf; font-size: 26px; font-weight: 500; letter-spacing: -0.3px; display: flex; align-items: center; padding-left: 24px;
}
.update svg { width: 6px; height: 26px; margin-left: 30px; fill: #f5d8cf; }

.bookmarks {
  height: 66px; flex: none; background: #355c31; border-bottom: 2px solid #64825f; padding: 0 0 8px 28px;
  display: grid; align-items: center; color: #fff; font-family: Inter, sans-serif; font-size: 24px; letter-spacing: -0.3px;
  grid-template-columns: 306px 296px 197px 158px 223px 214px 217px 291px 303px 299px 309px 300px;
}
.bookmarks a { display: flex; align-items: center; white-space: nowrap; }
.hsu {
  width: 32px; height: 32px; background: #d8685c; margin-right: 16px; font-size: 13px; font-weight: 700;
  display: flex; align-items: center; justify-content: center; letter-spacing: 0;
}

/* console header */
.aws { height: 142px; flex: none; background: #252f3e; border-bottom: 2px solid #545b64; color: #fff; font-size: 24px; letter-spacing: -0.3px; font-weight: 500; }
.aws-top { height: 82px; display: flex; align-items: center; }
.aws-logo { width: 134px; height: 44px; border-right: 2px solid #3f4753; padding-left: 35px; flex: none; }
.aws-logo b { display: block; font-size: 34px; line-height: 24px; font-weight: 500; letter-spacing: -1px; margin-top: -3px; padding-left: 3px; }
.aws-logo svg { width: 64px; height: 18px; margin-top: 5px; }
.services { width: 205px; padding-left: 34px; display: flex; align-items: center; gap: 16px; letter-spacing: -0.4px; }
.services svg { width: 32px; height: 32px; }
.aws-search {
  width: 1080px; height: 60px; border: 2px solid #879596; border-radius: 4px; background: #191a1f; color: #95a5a6;
  display: flex; align-items: center; padding: 0 19px 0 21px; font-size: 28px; font-weight: 400;
}
.aws-search svg { width: 29px; height: 29px; color: #d5dbdb; margin-right: 20px; }
.aws-search i { font-style: italic; flex: 1; }
.util { margin-left: auto; display: flex; align-items: center; }
.cell { width: 100px; height: 44px; border-left: 2px solid #3f4753; display: flex; align-items: center; justify-content: center; white-space: nowrap; }
.cell svg { width: 32px; height: 32px; }
.white { color: #fff; }
.tri, .cell svg.tri { width: 20px; height: 16px; color: #545b64; }
.cell svg.tri { width: 17px; height: 15px; color: #fff; margin-left: 13px; }
.c-shell { border: 0; }
.c-region { width: 214px; letter-spacing: -0.5px; }
.c-user { width: 519px; justify-content: flex-start; padding-left: 33px; letter-spacing: 0.26px; }
.aws-favs { display: grid; align-items: center; height: 56px; padding: 0 0 0 38px; grid-template-columns: 136px 275px 139px 136px 226px 200px; letter-spacing: -0.6px; }
.aws-favs a { display: flex; align-items: center; gap: 10px; white-space: nowrap; }
.aws-favs svg { width: 48px; height: 48px; }

/* page body */
.page { flex: none; height: 1682px; display: flex; background: #f2f3f3; overflow: hidden; }
.side { width: 501px; flex: none; background: #fff; border-right: 3px solid #c4cccc; color: #545b64; }
.side-head { height: 114px; border-bottom: 2px solid #eaeded; display: flex; justify-content: space-between; padding: 0 43px 0 54px; align-items: center; }
.side-head h2 { font-size: 35px; color: #16191f; }
.side-head svg { width: 26px; height: 26px; margin-top: 11px; }
.side-fav { height: 72px; background: #fafafa; border-bottom: 2px solid #eaeded; display: flex; align-items: center; justify-content: space-between; padding: 0 36px 0 59px; }
.side-fav svg { width: 16px; height: 20px; }
.side ul { list-style: none; }
.side li { height: 64px; display: flex; align-items: center; padding-left: 64px; white-space: pre; }
.side li.first { margin-top: 13px; }
.side .sec { font-weight: 700; padding-left: 29px; }
.side .alarms { margin-top: 4px; white-space: normal; }
.side .gap { margin-top: 30px; }
.side .gap-s { margin-top: 10px; }
.side .on { color: #e07b32; font-weight: 700; }
.side li a { color: #2d72b8; border-bottom: 2px dashed #2d72b8; line-height: 34px; margin-left: 4px; letter-spacing: 0; }
.caret { width: 19px; height: 16px; color: #879596; margin-right: 16px; }
.caret.right { transform: rotate(-90deg); }
.counts { display: flex; align-items: center; margin-left: 36px; font-size: 24px; color: #687078; }
.counts svg { width: 32px; height: 32px; }
.counts b { margin: 0 16px 0 8px; }

.main { width: 2964px; flex: none; padding: 0 17px 0 15px; display: flex; flex-direction: column; }
.crumbs { height: 80px; padding-top: 16px; display: flex; align-items: center; color: #687078; letter-spacing: -0.55px; }
a { color: inherit; text-decoration: none; }
.main a { color: #2d72b8; }
.chev { width: 19px; height: 30px; }
.crumbs .chev { margin: -4px 27px 0 31px; }
.graph-head { height: 82px; display: flex; justify-content: space-between; align-items: flex-start; }
.graph-head h1 { height: 66px; font-size: 32px; font-weight: 400; letter-spacing: -0.55px; display: flex; align-items: center; }
.graph-head h1 svg { width: 27px; height: 28px; margin-left: 15px; }
.controls { display: flex; }
.range, .tz, .kind, .btn { background: #fff; display: flex; align-items: center; flex: none; white-space: nowrap; }
.range { width: 798px; height: 64px; border: 2px solid #879596; color: #687078; }
.range span { text-align: center; }
.r1 { width: 82px; } .r2 { width: 80px; } .r3 { width: 104px; } .r4 { width: 78px; } .r5 { width: 84px; } .r6 { width: 86px; }
.range b { height: 60px; margin-left: 12px; border-left: 2px solid #eaeded; flex: 1; display: flex; align-items: center; padding-left: 13px; color: #2d72b8; letter-spacing: -0.5px; }
.range b svg { width: 28px; height: 28px; margin-left: auto; margin-right: 18px; }
.tz { width: 278px; height: 64px; border: 2px solid #879596; border-left: 0; border-radius: 0 4px 4px 0; padding: 0 22px 0 17px; justify-content: space-between; }
.kind { width: 240px; height: 60px; margin-left: 20px; border: 2px solid #aab7b8; border-radius: 4px; padding: 0 19px; justify-content: space-between; }
.btn { height: 60px; border: 2px solid #545b64; border-radius: 4px; color: #545b64; font-weight: 700; justify-content: center; }
.actions { width: 225px; margin-left: 20px; gap: 25px; }
.refresh { width: 101px; height: 64px; margin-left: 18px; }
.refresh svg { width: 32px; height: 32px; }
.more { width: 102px; height: 64px; margin-left: -2px; }

.chart { height: 747px; flex: none; margin-top: -2px; background: #fff; border-top: 2px solid #eaeded; position: relative; width: 2933px; }
.plot { width: 2932px; height: 745px; }
.t20, .t22, .t24 { letter-spacing: 0; }
.t20 { font-size: 20px; fill: #16191f; font-weight: 500; }
.t22 { font-size: 22px; fill: #444; }
.t24 { font-size: 24px; fill: #444; letter-spacing: -0.6px; }
.tip {
  position: absolute; left: 1705px; top: 642px; width: 490px; height: 118px; background: #fff; border: 4px solid #ccc;
  border-radius: 8px; box-shadow: 0 6px 18px rgba(0,0,0,.4); padding: 15px 0 0 10px; z-index: 2;
  font-family: "Liberation Sans", Arial, sans-serif; font-size: 24px; color: #444; letter-spacing: 0; line-height: 32px;
}
.tip strong { font-size: 28px; letter-spacing: 0.15px; display: block; height: 56px; }
.tip-row { display: flex; align-items: center; }
.tip-row i { width: 27px; height: 27px; border: 5px solid #3a77b3; border-radius: 50%; margin: 0 13px 0 12px; }
.tip-row b { margin-left: 9px; }

.handle { height: 37px; flex: none; display: flex; flex-direction: column; align-items: center; gap: 6px; padding: 13px 0 0 10px; }
.handle i { width: 25px; height: 4px; background: #545b64; }

.tabs { height: 98px; flex: none; width: 2933px; border-bottom: 2px solid #aab7b8; display: flex; padding: 6px 0 0 4px; font-weight: 700; color: #545b64; }
.tabs span { height: 56px; border-right: 2px solid #aab7b8; display: flex; align-items: center; justify-content: center; padding-left: 6px; white-space: nowrap; }
.tabs .on { color: #e07b32; position: relative; padding-left: 0; padding-right: 3px; }
.tabs .on::after { content: ""; position: absolute; left: 0; top: 86px; width: 139px; height: 4px; background: #16191f; }
.t1 { width: 133px; letter-spacing: -0.9px; } .t2 { width: 130px; } .t3 { width: 309px; } .t4 { width: 153px; }
.tabs .t5 { width: 136px; border: 0; }
.tab-actions { margin-left: auto; display: flex; gap: 20px; padding-top: 18px; }
.b-math { width: 258px; gap: 26px; } .b-query { width: 265px; gap: 26px; letter-spacing: -0.8px; }

.panel { height: 614px; flex: none; margin: 2px 0 0 2px; width: 2929px; background: #fff; overflow: hidden; border-top: 2px solid #eaeded; }
.panel-head { height: 87px; background: #fafafa; display: flex; align-items: center; padding: 0 33px 0 16px; gap: 20px; }
.panel-head h2 { font-size: 34px; letter-spacing: -0.7px; margin: -13px auto 0 0; white-space: pre; }
.panel-head h2 span { font-weight: 400; color: #687078; font-size: 36px; letter-spacing: 0; margin-left: 2px; }
.panel-head h2 a { font-size: 28px; margin-left: 25px; }
.b-sql { width: 298px; letter-spacing: -0.2px; } .b-search { width: 263px; }
.filters { height: 82px; background: #fafafa; border-bottom: 4px solid #eaeded; display: flex; align-items: center; padding: 0 0 19px 16px; white-space: nowrap; }
.b-region { width: 269px; gap: 27px; letter-spacing: -0.5px; }
.f-all { width: 64px; margin-left: 17px; }
.f-cw { width: 147px; margin-left: 27px; }
.f-dim { width: 480px; margin-left: 27px; color: #687078; letter-spacing: -0.75px; }
.f-dim em { color: #16191f; letter-spacing: 2px; }
.find { width: 1555px; height: 60px; border: 2px solid #aab7b8; border-radius: 4px; background: #fff; display: flex; align-items: center; gap: 18px; padding: 2px 0 0 20px; font-style: italic; color: #95a5a6; letter-spacing: -0.15px; }
.find svg { width: 29px; height: 29px; color: #687078; }
.back { transform: scaleX(-1); margin-left: 51px; }
.pg { width: 92px; text-align: center; }
.prefs { margin-left: 17px; height: 56px; border-left: 2px solid #eaeded; display: flex; align-items: center; padding: 2px 0 0 14px; }
.prefs svg { width: 32px; height: 32px; color: #545b64; }

.row { display: grid; grid-template-columns: 107px 470px 409px 371px 330px 160px 1082px; height: 80px; border-bottom: 2px solid #eaeded; align-items: center; }
.row > div { padding: 2px 0 0 17px; display: flex; align-items: center; }
.row > .ck { padding-left: 40px; }
.row > div:nth-child(2) { letter-spacing: -0.8px; }
.row u { text-decoration: none; border-bottom: 2px dashed #16191f; line-height: 34px; letter-spacing: -0.5px; }
.row u.id { letter-spacing: 0; }
.head { height: 76px; background: #fafafa; font-weight: 700; color: #545b64; }
.head > div { height: 42px; border-left: 2px solid #545b64; justify-content: space-between; padding: 0 29px 0 15px; letter-spacing: -0.85px; }
.head > .ck { border: 0; }
.head > .sorted.sorted { border-color: #eaeded; color: #16191f; letter-spacing: -0.7px; }
.head > div:last-child { padding-right: 31px; }
.head .tri { color: #687078; }
.head .up { transform: scaleY(-1); color: #16191f; }
.box { width: 28px; height: 28px; border: 2px solid #879596; border-radius: 4px; background: #fff; display: block; }
.mixed, .tick { background: #2d72b8; border: 0; }
.mixed { padding: 12px 5px; }
.mixed::before { content: ""; display: block; height: 4px; background: #fff; }
.picked { height: 81px; margin-top: -1px; background: #f1faff; border: 2px solid #2d72b8; }
.picked > div { margin-left: -2px; }

.rail { flex: 1; background: #fff; border-left: 2px solid #eaeded; color: #545b64; display: flex; flex-direction: column; align-items: center; padding-right: 4px; }
.rail div { display: flex; flex-direction: column; align-items: center; gap: 21px; }
.rail-q { margin-top: 58px; }
.rail-q svg { width: 28px; height: 28px; }
.rail-h { margin-top: 120px; }
.rail .rail-h svg { width: 32px; height: 32px; }

.foot { height: 62px; flex: none; border-top: 2px solid #545b64; background: #252f3e; color: #fff; display: flex; align-items: center; padding-left: 32px; font-size: 24px; letter-spacing: -0.55px; font-weight: 500; white-space: nowrap; }
.foot svg { width: 32px; height: 32px; }
.f1 { width: 168px; margin-left: 10px; }
.f3 { margin-left: auto; width: 613px; } .f4 { width: 135px; } .f5 { width: 120px; } .f6 { width: 239px; }

/* dock */
.dock {
  position: relative; width: 1710px; height: 74px; margin-top: 1px; border: 2px solid rgba(255,255,255,.2); border-radius: 20px; flex: none;
  background: linear-gradient(90deg, #361521, #3a1726 25%, #471c1c 48%, #3a1521 70%, #421a33 90%, #361521);
  display: flex; align-items: center; padding: 0 0 9px 3px;
}
.app { width: 54px; display: flex; justify-content: center; position: relative; flex: none; margin-top: 5px; }
.app > svg { width: 40px; height: 40px; }
.run::after { content: ""; position: absolute; left: 24px; top: 49px; width: 6px; height: 6px; border-radius: 50%; background: #c3a3b0; }
.app em {
  position: absolute; left: 35px; top: -5px; min-width: 19px; height: 19px; border-radius: 10px; background: #e2453b; color: #fff;
  font: 12px/19px Inter, sans-serif; text-align: center;
}
.app em.pale { background: #d8d8da; color: #222; }
.cal > div { width: 40px; height: 40px; border-radius: 9px; overflow: hidden; background: #f6f5f4; text-align: center; font-family: Inter, sans-serif; }
.cal small { display: block; height: 12px; background: #e5534c; color: #fff; font-size: 9px; line-height: 13px; letter-spacing: 0; font-weight: 600; }
.cal strong { display: block; font-size: 25px; line-height: 27px; font-weight: 300; letter-spacing: -1px; color: #222; }
.tv > div { width: 40px; height: 40px; border-radius: 9px; background: #182021; color: #fff; font: 500 17px Inter, sans-serif; display: flex; align-items: center; justify-content: center; }
.tv svg { width: 12px; height: 14px; }
.term > div { width: 40px; height: 40px; border-radius: 9px; border: 2px solid #aab0b5; background: #101819; color: #4fae3c; font: 700 11px/14px "Liberation Mono", monospace; padding: 3px 4px; display: flex; gap: 1px; }
.term i { width: 4px; height: 9px; margin-top: 3px; background: #3c8a2e; }
.notion > div { width: 36px; height: 38px; border: 3px solid #1c1c1c; border-left-width: 6px; border-radius: 7px; background: #fff; outline: 1px solid #eee; font: 700 25px/32px "Liberation Serif", serif; text-align: center; color: #111; margin-top: 1px; }
.split { width: 26px; height: 52px; margin-top: 6px; background: linear-gradient(#7a5562, #7a5562) 14px 0 / 1px 100% no-repeat; flex: none; }
.app.folder > svg { width: 42px; height: 44px; margin-top: -4px; }
.mini { width: 54px; flex: none; display: flex; justify-content: center; margin-top: 14px; }
.mini svg { width: 48px; height: 36px; }
.app.trash > svg { width: 36px; height: 46px; margin-top: -2px; }
```
